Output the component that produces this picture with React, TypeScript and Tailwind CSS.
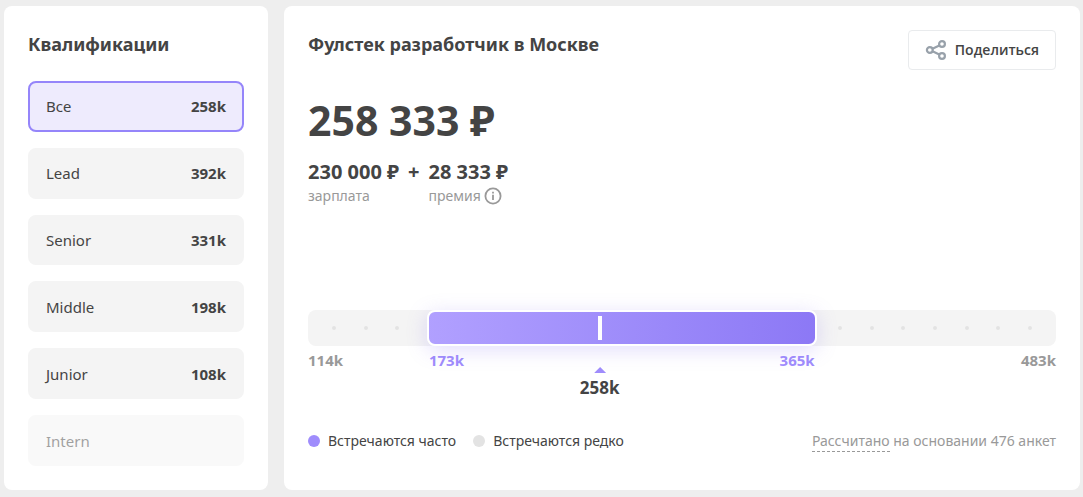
import { useState } from "react";

type Level = { name: string; salary?: string };

const levels: Level[] = [
  { name: "Все", salary: "258k" },
  { name: "Lead", salary: "392k" },
  { name: "Senior", salary: "331k" },
  { name: "Middle", salary: "198k" },
  { name: "Junior", salary: "108k" },
  { name: "Intern" },
];

const scale = { min: 114, low: 173, median: 258, high: 365, max: 483 };

function percent(value: number) {
  return Math.floor(((value - scale.min) / (scale.max - scale.min)) * 1000) / 10;
}

function ShareIcon() {
  return (
    <svg width="22" height="22" viewBox="0 0 22 22" fill="none" stroke="#98a1aa" strokeWidth="2.2" aria-hidden="true">
      <circle cx="4.8" cy="11" r="2.9" />
      <circle cx="17" cy="5" r="2.9" />
      <circle cx="17" cy="17" r="2.9" />
      <path d="M7.5 9.7 14.3 6.4M7.5 12.3l6.8 3.3" />
    </svg>
  );
}

function InfoIcon() {
  return (
    <svg width="18" height="18" viewBox="0 0 18 18" fill="none" stroke="#999" strokeWidth="1.8" aria-hidden="true">
      <circle cx="9" cy="9" r="7.6" />
      <path d="M9 7.8v5.2M9 4.8v1.8" />
    </svg>
  );
}

function Qualifications() {
  const [selected, setSelected] = useState("Все");
  return (
    <aside className="flex w-66 shrink-0 flex-col rounded-lg bg-white p-6">
      <h2 className="text-lg leading-7 font-bold">Квалификации</h2>
      <ul className="mt-[23px] flex flex-1 flex-col gap-4">
        {levels.map(({ name, salary }) => (
          <li key={name} className="flex min-h-12 flex-1">
            <button
              type="button"
              disabled={!salary}
              aria-pressed={selected === name}
              onClick={() => setSelected(name)}
              className={`flex w-full items-center justify-between rounded-lg border-2 px-4 text-[15px] leading-6 disabled:opacity-50 ${
                selected === name ? "border-[#9585fa] bg-[#eeebfd]" : "border-[#f4f4f4] bg-[#f4f4f4]"
              }`}
            >
              <span>{name}</span>
              {salary && <span className="font-bold">{salary}</span>}
            </button>
          </li>
        ))}
      </ul>
    </aside>
  );
}

function SalaryRange() {
  const low = percent(scale.low);
  const high = percent(scale.high);
  const median = percent(scale.median);
  return (
    <div className="relative mt-26">
      <div className="relative flex h-9 items-center justify-between rounded-lg bg-[#f4f4f4] px-6">
        {Array.from({ length: 23 }, (_, i) => (
          <span key={i} className="size-1 rounded-full bg-[#e3e3e3]" />
        ))}
        <div
          className="absolute inset-y-0 rounded-lg border-2 border-white bg-linear-to-r from-[#b1a0ff] to-[#8c78f5] bg-origin-border shadow-[0_4px_20px_rgba(140,120,245,0.25)]"
          style={{ left: `${low}%`, right: `${100 - high}%` }}
        />
        <span className="absolute inset-y-1.5 w-1 -translate-x-1/2 bg-white" style={{ left: `${median}%` }} />
      </div>
      <div
        className="grid pt-0.5 text-[15px] leading-6 font-bold text-[#999]"
        style={{ gridTemplateColumns: `${low}fr ${high - low}fr ${100 - high}fr` }}
      >
        <span>{scale.min}k</span>
        <span className="flex justify-between px-0.5 text-[#9f8cfc]">
          <span>{scale.low}k</span>
          <span>{scale.high}k</span>
        </span>
        <span className="text-right">{scale.max}k</span>
      </div>
      <div
        className="absolute top-[57px] flex -translate-x-1/2 flex-col items-center"
        style={{ left: `${median}%` }}
      >
        <svg width="12" height="6" viewBox="0 0 12 6" fill="#9f8cfc" aria-hidden="true">
          <path d="M6 0l6 6H0z" />
        </svg>
        <span className="mt-[3px] text-[17px] leading-6 font-bold">{scale.median}k</span>
      </div>
    </div>
  );
}

export default function App() {
  return (
    <div className="flex min-h-screen gap-4 bg-[#eee] pt-1.5 pr-[3px] pb-[7px] pl-1 font-['Noto_Sans','Open_Sans',sans-serif] text-[#444]">
      <Qualifications />
      <main className="min-w-0 flex-1 rounded-lg bg-white p-6">
        <header className="flex items-start justify-between">
          <h1 className="text-lg leading-7 font-bold">Фулстек разработчик в Москве</h1>
          <button
            type="button"
            className="flex h-10 items-center gap-2 rounded border border-[#e9ebed] px-4 font-['Open_Sans','Noto_Sans',sans-serif] text-sm font-semibold"
          >
            <ShareIcon />
            Поделиться
          </button>
        </header>
        <p className="mt-[22px] text-[41px] leading-14 font-bold">258 333 ₽</p>
        <div className="mt-2.5 flex gap-[9px] text-xl leading-7 font-bold">
          <div>
            <p>230 000 ₽</p>
            <p className="text-sm leading-5 font-normal text-[#999]">зарплата</p>
          </div>
          <span>+</span>
          <div>
            <p>28 333 ₽</p>
            <p className="flex items-center gap-[3px] text-sm leading-5 font-normal text-[#999]">
              премия
              <button type="button" aria-label="О премии">
                <InfoIcon />
              </button>
            </p>
          </div>
        </div>
        <SalaryRange />
        <footer className="mt-[57px] flex items-center justify-between text-sm leading-6">
          <ul className="flex gap-[17px]">
            <li className="flex items-center gap-2">
              <span className="size-3 rounded-full bg-[#9f8cfc]" />
              Встречаются часто
            </li>
            <li className="flex items-center gap-2">
              <span className="size-3 rounded-full bg-[#e3e3e3]" />
              Встречаются редко
            </li>
          </ul>
          <p className="text-[#999]">
            <a href="#method" className="border-b border-dashed border-[#999] pb-px">
              Рассчитано
            </a>{" "}
            на основании 476 анкет
          </p>
        </footer>
      </main>
    </div>
  );
}
